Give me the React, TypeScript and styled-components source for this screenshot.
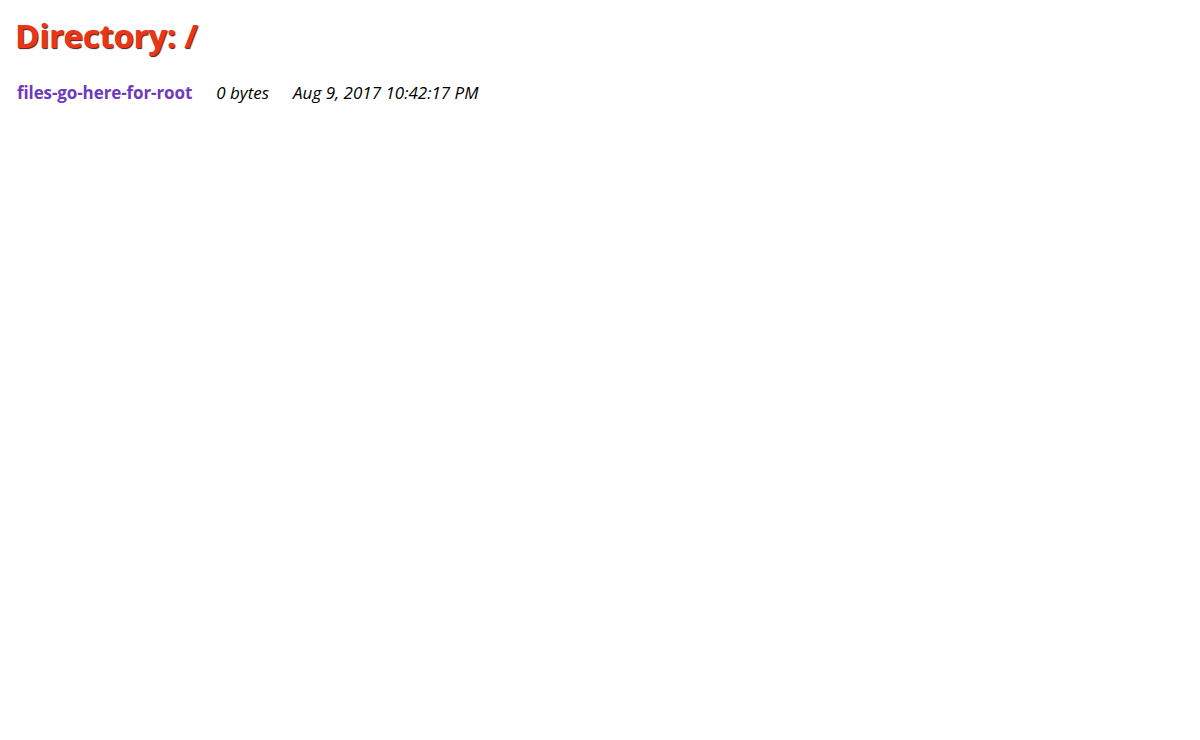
import styled, { createGlobalStyle } from "styled-components"

const GlobalStyle = createGlobalStyle`
  html, body {
    margin: 0;
    padding: 0;
    background: #ffffff;
  }
  body {
    font-family: "Open Sans", "Noto Sans", sans-serif;
    color: #000;
  }
`

const Page = styled.div`
  padding: 13px 15px;
`

const Heading = styled.h1`
  margin: 0 0 23px;
  font-size: 33px;
  font-weight: 700;
  line-height: 46px;
  color: #ec3418;
  text-shadow: 1px 1px 1px #4a1a10;
  letter-spacing: -0.3px;
`

const Listing = styled.table`
  border-collapse: collapse;
`

const Cell = styled.td<{ $italic?: boolean }>`
  padding: 0 22px 0 2px;
  font-size: 17px;
  line-height: 22px;
  font-style: ${(p) => (p.$italic ? "italic" : "normal")};
  white-space: nowrap;
`

const FileLink = styled.a`
  color: #6e3bbd;
  font-weight: 700;
  text-decoration: none;
  letter-spacing: -0.1px;
`

const files = [{ name: "files-go-here-for-root", size: "0 bytes", date: "Aug 9, 2017 10:42:17 PM" }]

export default function App() {
  return (
    <>
      <GlobalStyle />
      <Page>
        <Heading>Directory: /</Heading>
        <Listing>
          <tbody>
            {files.map((f) => (
              <tr key={f.name}>
                <Cell>
                  <FileLink href="#">{f.name}</FileLink>
                </Cell>
                <Cell $italic>{f.size}</Cell>
                <Cell $italic>{f.date}</Cell>
              </tr>
            ))}
          </tbody>
        </Listing>
      </Page>
    </>
  )
}
